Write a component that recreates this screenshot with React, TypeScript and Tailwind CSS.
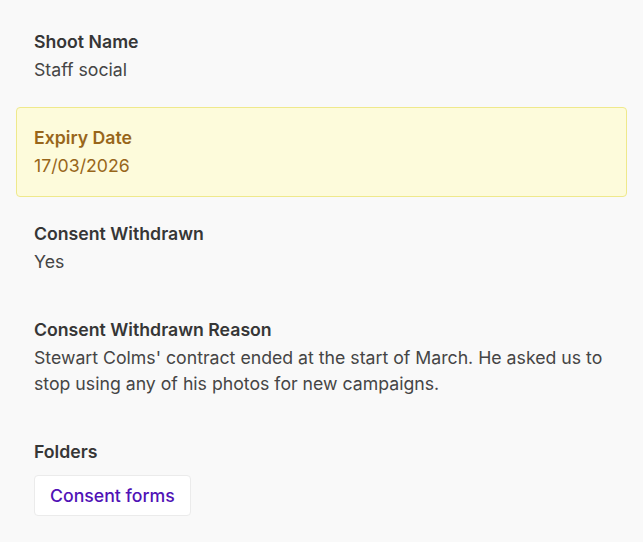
const fields = [
  { label: "Shoot Name", value: "Staff social" },
  { label: "Expiry Date", value: "17/03/2026", highlight: true },
  { label: "Consent Withdrawn", value: "Yes" },
  {
    label: "Consent Withdrawn Reason",
    value:
      "Stewart Colms' contract ended at the start of March. He asked us to stop using any of his photos for new campaigns.",
  },
];

export default function App() {
  return (
    <div
      className="min-h-[542px] bg-[#f9f9f9] px-4 pt-[11px] text-[17.7px] leading-[26px]"
      style={{ fontFamily: "Inter, 'Noto Sans', sans-serif" }}
    >
      <div className="flex flex-col gap-[6px]">
        {fields.map((f) => (
          <div
            key={f.label}
            className={
              f.highlight
                ? "rounded-[4px] border border-[#efe98c] bg-[#fdfbdb] px-[17px] py-[17px]"
                : "border border-transparent px-[17px] py-[17px]"
            }
          >
            <div
              className={
                f.highlight
                  ? "font-semibold text-[#98661a]"
                  : "font-semibold text-[#363636]"
              }
            >
              {f.label}
            </div>
            <div
              className={
                f.highlight
                  ? "mt-[2px] text-[#98661a]"
                  : "mt-[2px] text-[#454545]"
              }
            >
              {f.value}
            </div>
          </div>
        ))}
        <div className="border border-transparent px-[17px] pt-[17px]">
          <div className="font-semibold text-[#363636]">Folders</div>
          <div className="mt-[10px] flex">
            <button className="h-[41px] rounded-[4px] border border-[#ebebeb] bg-white px-[15px] font-medium text-[#5012b6]">
              Consent forms
            </button>
          </div>
        </div>
      </div>
    </div>
  );
}
